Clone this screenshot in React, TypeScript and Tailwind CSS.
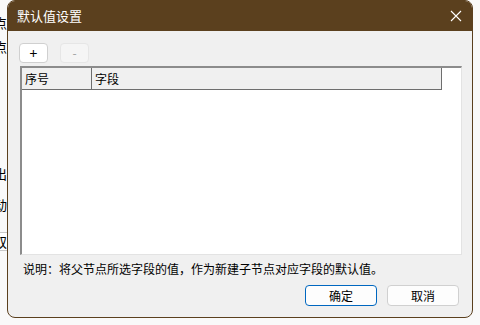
import React from "react";

const font = { fontFamily: '"Noto Sans CJK SC", "Noto Sans", sans-serif' };

const Backdrop = () => (
  <div className="absolute left-0 top-0 h-full w-[8px] overflow-hidden bg-[#f9f9f9] text-[13px] text-black">
    <span className="absolute left-[-6px] top-[13px]">点</span>
    <span className="absolute left-[-6px] top-[37px]">点</span>
    <span className="absolute left-[-6px] top-[164px]">出</span>
    <span className="absolute left-[-6px] top-[195px]">动</span>
    <span className="absolute left-[-8px] top-[232px] h-[19px] w-[16px] border border-[#c8c8c8] bg-white pl-[1px] leading-[17px]">双</span>
  </div>
);

const SmallButton = ({ label, disabled }: { label: string; disabled?: boolean }) => (
  <button
    className={
      disabled
        ? "h-[20px] w-[29px] rounded-[4px] border border-[#e6e6e6] bg-[#f5f5f5] text-[12px] leading-none text-[#a0a0a0]"
        : "h-[20px] w-[29px] rounded-[4px] border border-[#d0d0d0] bg-white text-[14px] leading-none text-black"
    }
  >
    {label}
  </button>
);

const App = () => {
  return (
    <div className="relative h-[325px] w-[480px] overflow-hidden bg-[#f9f9f9]" style={font}>
      <Backdrop />
      <div className="absolute left-[7px] top-0 flex h-[318px] w-[466px] flex-col overflow-hidden rounded-[8px] border border-[#5b401e] bg-[#f0f0f0]">
        <div className="flex h-[30px] shrink-0 items-center justify-between bg-[#5b401e] pl-[9px] pr-[9px]">
          <span className="text-[13px] text-white">默认值设置</span>
          <svg width="12" height="12" viewBox="0 0 12 12" className="mr-[1px]">
            <path d="M1 1 L11 11 M11 1 L1 11" stroke="#ffffff" strokeWidth="1.1" />
          </svg>
        </div>
        <div className="flex flex-1 flex-col pl-[11px] pr-[11px]">
          <div className="mt-[12px] flex gap-[12px]">
            <SmallButton label="+" />
            <SmallButton label="-" disabled />
          </div>
          <div className="ml-[1px] mt-[3px] flex h-[189px] w-[442px] flex-col border-l-2 border-t-2 border-b border-r border-l-[#8c8c8c] border-t-[#8c8c8c] border-b-[#e3e3e3] border-r-[#e3e3e3] bg-white">
            <div className="flex h-[22px] w-[420px] border-b border-[#6e6e6e] bg-[#f0f0f0] text-[12px] text-black">
              <div className="flex w-[70px] items-center border-r border-[#6e6e6e] pl-[3px]">序号</div>
              <div className="flex flex-1 items-center border-r border-[#6e6e6e] pl-[3px]">字段</div>
            </div>
          </div>
          <p className="mt-[5px] pl-[4px] text-[12px] text-black">
            说明：将父节点所选字段的值，作为新建子节点对应字段的默认值。
          </p>
          <div className="mt-[7px] flex justify-end gap-[10px] pr-[2px]">
            <button className="h-[21px] w-[72px] rounded-[4px] border border-[#0067c0] bg-[#fdfdfd] text-[12px] text-black">
              确定
            </button>
            <button className="h-[21px] w-[72px] rounded-[4px] border border-[#d0d0d0] bg-[#fdfdfd] text-[12px] text-black">
              取消
            </button>
          </div>
        </div>
      </div>
    </div>
  );
};

export default App;
